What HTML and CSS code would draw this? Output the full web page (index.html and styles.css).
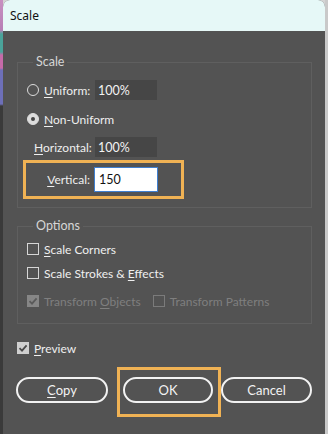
FILE: index.html
```html
<!DOCTYPE html>
<html lang="en">
  <head>
    <meta charset="UTF-8" />
    <meta name="viewport" content="width=device-width, initial-scale=1.0" />
    <title>Scale</title>
    <link rel="stylesheet" href="styles.css">
  </head>

  <body>
    <div class="screen">
      <div class="edge-left"></div>

      <div class="window">
        <div class="titlebar">Scale</div>

        <div class="dialog">
          <fieldset class="group group-scale">
            <legend>Scale</legend>

            <div class="row row-uniform">
              <span class="radio"></span>
              <span class="label label-radio"><u>U</u>niform:</span>
              <span class="field">100%</span>
            </div>

            <div class="row row-nonuniform">
              <span class="radio checked"></span>
              <span class="label"><u>N</u>on-Uniform</span>
            </div>

            <div class="row row-horizontal">
              <span class="label label-indent"><u>H</u>orizontal:</span>
              <span class="field">100%</span>
            </div>

            <div class="highlight highlight-vertical">
              <span class="label label-right"><u>V</u>ertical:</span>
              <span class="field field-active">150</span>
            </div>
          </fieldset>

          <fieldset class="group group-options">
            <legend>Options</legend>

            <div class="row check-row row-corners">
              <span class="checkbox"></span>
              <span class="label"><u>S</u>cale Corners</span>
            </div>

            <div class="row check-row row-strokes">
              <span class="checkbox"></span>
              <span class="label">Scale Strokes &amp; <u>E</u>ffects</span>
            </div>

            <div class="row check-row row-transform">
              <span class="checkbox checked disabled">
                <svg viewBox="0 0 12 12" width="12" height="12"><path d="M2.5 6.2 L5 8.6 L9.6 3.4" /></svg>
              </span>
              <span class="label disabled">Transform <u>O</u>bjects</span>
              <span class="checkbox disabled second"></span>
              <span class="label disabled">Transform Pat<u>t</u>erns</span>
            </div>
          </fieldset>

          <div class="row check-row row-preview">
            <span class="checkbox checked">
              <svg viewBox="0 0 12 12" width="12" height="12"><path d="M2.5 6.2 L5 8.6 L9.6 3.4" /></svg>
            </span>
            <span class="label"><u>P</u>review</span>
          </div>

          <div class="buttons">
            <button class="btn btn-copy"><u>C</u>opy</button>
            <div class="highlight highlight-ok">
              <button class="btn btn-ok">OK</button>
            </div>
            <button class="btn btn-cancel">Cancel</button>
          </div>
        </div>
      </div>

      <div class="edge-right"></div>
    </div>
  </body>
</html>
```

FILE: styles.css
```css
* {
  margin: 0;
  padding: 0;
  box-sizing: border-box;
}

body {
  width: 328px;
  height: 434px;
  overflow: hidden;
  background-color: #d4d4d4;
  font-family: "Lato", "Liberation Sans", sans-serif;
  font-size: 12px;
  color: #efefef;
}

.screen {
  display: flex;
  height: 434px;
}

.edge-left {
  width: 3px;
  background: linear-gradient(
    180deg,
    #c88fc0 0px,
    #b77fb6 30px,
    #4aa39a 34px,
    #4aa39a 52px,
    #c56aa8 55px,
    #c56aa8 68px,
    #6d6fb8 70px,
    #6d6fb8 104px,
    #3a3a3a 106px
  );
}

.edge-right {
  width: 3px;
  background-color: #c9c9c9;
}

.window {
  width: 322px;
  display: flex;
  flex-direction: column;
  background-color: #535353;
  border-radius: 7px 7px 0 0;
  overflow: hidden;
}

.titlebar {
  height: 31px;
  padding-left: 7px;
  display: flex;
  align-items: center;
  background-color: #e6f8f7;
  color: #111;
  font-family: "Noto Sans", sans-serif;
  font-size: 12px;
}

.dialog {
  flex: 1;
  padding: 23px 13px 0 14px;
  display: flex;
  flex-direction: column;
}

u {
  text-decoration-thickness: 1px;
  text-underline-offset: 2px;
}

.group {
  border: 1px solid #5f5f5f;
  padding: 0 0 0 9px;
  display: flex;
  flex-direction: column;
}

.group legend {
  margin-left: 6px;
  padding: 0 3px;
  line-height: 16px;
  font-size: 12.5px;
  color: #d6d6d6;
}

.row {
  display: flex;
  align-items: center;
  height: 20px;
}

.label {
  white-space: nowrap;
}

/* scale group */

.group-scale {
  padding-bottom: 8px;
}

.row-uniform {
  margin-top: 10px;
}

.row-nonuniform {
  margin-top: 9px;
}

.row-horizontal {
  margin-top: 8px;
}

.radio {
  width: 12px;
  height: 12px;
  border-radius: 50%;
  border: 1.5px solid #dcdcdc;
  display: flex;
  align-items: center;
  justify-content: center;
}

.radio + .label {
  margin-left: 5px;
}

.label-radio {
  width: 44px;
}

.label-indent {
  width: 61px;
  padding-left: 7px;
}

.radio.checked {
  background-color: #dcdcdc;
}

.radio.checked::after {
  content: "";
  width: 4px;
  height: 4px;
  border-radius: 50%;
  background-color: #444;
}

.field {
  width: 62px;
  height: 20px;
  margin-left: 7px;
  padding-left: 3px;
  display: flex;
  align-items: center;
  background-color: #464646;
  color: #f2f2f2;
  font-size: 12.5px;
}

.highlight {
  border: 3px solid #f0b254;
}

.highlight-vertical {
  width: 161px;
  height: 39px;
  margin: 3px 0 0 -4px;
  display: flex;
  align-items: center;
}

.label-right {
  width: 64px;
  text-align: right;
}

.field-active {
  width: 64px;
  height: 25px;
  margin-left: 4px;
  padding-left: 4px;
  background-color: #fff;
  border: 1px solid #3f7fd0;
  color: #111;
}

/* options group */

.group-options {
  margin-top: 10px;
  padding-bottom: 13px;
}

.check-row {
  height: 18px;
}

.row-corners {
  margin-top: 6px;
}

.row-strokes {
  margin-top: 6px;
}

.row-transform {
  margin-top: 10px;
}

.checkbox {
  width: 12px;
  height: 12px;
  border: 1px solid #d6d6d6;
  display: flex;
  flex-shrink: 0;
}

.checkbox + .label {
  margin-left: 5px;
}

.checkbox.checked {
  background-color: #cfcfcf;
  border-color: #cfcfcf;
}

.checkbox svg {
  margin: -1px;
  fill: none;
  stroke: #4a4a4a;
  stroke-width: 1.8;
}

.checkbox.disabled {
  border-color: #7b7b7b;
}

.checkbox.checked.disabled {
  background-color: #868686;
  border-color: #868686;
}

.checkbox.checked.disabled svg {
  stroke: #5a5a5a;
}

.checkbox.second {
  margin-left: 12px;
}

.label.disabled {
  color: #7f7f7f;
}

/* bottom */

.row-preview {
  margin-top: 15px;
}

.buttons {
  margin-top: 10px;
  display: flex;
  align-items: flex-start;
}

.btn {
  height: 26px;
  border: 2px solid #f2f2f2;
  border-radius: 13px;
  background: transparent;
  color: #f2f2f2;
  font-family: "Lato", "Liberation Sans", sans-serif;
  font-size: 13px;
}

.btn-copy {
  width: 92px;
  margin: 10px 9px 0 -1px;
}

.highlight-ok {
  padding: 7px 5px 11px 3px;
}

.btn-ok {
  width: 90px;
  display: block;
}

.btn-cancel {
  width: 91px;
  margin-top: 10px;
}
```
